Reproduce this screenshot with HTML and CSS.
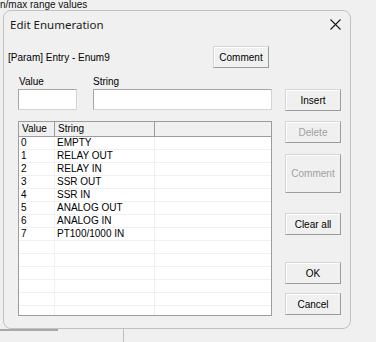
FILE: index.html
```html
<!DOCTYPE html>
<html>
  <head>
    <meta charset="utf-8" />
    <meta name="viewport" content="width=device-width, initial-scale=1.0" />
    <link rel="stylesheet" href="styles.css">
  </head>

  <body>
    <div class="caption">n/max range values</div>
    <div class="dialog">
      <div class="titlebar">
        <span class="title">Edit Enumeration</span>
        <svg class="close" width="11" height="11" viewBox="0 0 11 11">
          <path d="M0.5 0.5 L10.5 10.5 M10.5 0.5 L0.5 10.5" stroke="#1a1a1a" stroke-width="1.1" fill="none" />
        </svg>
      </div>
      <div class="headRow">
        <span>[Param] Entry - Enum9</span>
        <button class="btn btnTop">Comment</button>
      </div>
      <div class="main">
        <div class="labels">
          <span class="lblValue">Value</span>
          <span>String</span>
        </div>
        <div></div>
        <div class="inputs">
          <input class="field fieldValue" type="text" />
          <input class="field fieldString" type="text" />
        </div>
        <button class="btn">Insert</button>
        <div class="list">
          <div class="listHead">
            <span>Value</span><span>String</span><span></span>
          </div>
          <div class="listRow"><span>0</span><span>EMPTY</span><span></span></div>
          <div class="listRow"><span>1</span><span>RELAY OUT</span><span></span></div>
          <div class="listRow"><span>2</span><span>RELAY IN</span><span></span></div>
          <div class="listRow"><span>3</span><span>SSR OUT</span><span></span></div>
          <div class="listRow"><span>4</span><span>SSR IN</span><span></span></div>
          <div class="listRow"><span>5</span><span>ANALOG OUT</span><span></span></div>
          <div class="listRow"><span>6</span><span>ANALOG IN</span><span></span></div>
          <div class="listRow"><span>7</span><span>PT100/1000 IN</span><span></span></div>
          <div class="listRow"><span></span><span></span><span></span></div>
          <div class="listRow"><span></span><span></span><span></span></div>
          <div class="listRow"><span></span><span></span><span></span></div>
          <div class="listRow"><span></span><span></span><span></span></div>
          <div class="listRow"><span></span><span></span><span></span></div>
          <div class="listRow"><span></span><span></span><span></span></div>
        </div>
        <div class="side">
          <button class="btn" disabled>Delete</button>
          <button class="btn btnTall" disabled>Comment</button>
          <button class="btn btnClear">Clear all</button>
          <button class="btn btnOk">OK</button>
          <button class="btn btnCancel">Cancel</button>
        </div>
      </div>
    </div>
    <div class="under">
      <div class="underBar"></div>
      <div class="underLine"></div>
    </div>
  </body>
</html>
```

FILE: styles.css
```css
html {
  font-family: "Liberation Sans", Arial, sans-serif;
}

body {
  margin: 0;
  width: 376px;
  height: 342px;
  overflow: hidden;
  background-color: #f0f0f0;
  font-size: 10px;
  color: #000;
}

.caption {
  height: 10px;
  line-height: 10px;
  font-size: 10px;
  color: #111;
  white-space: nowrap;
}

.dialog {
  margin-left: 3px;
  width: 348px;
  height: 319px;
  box-sizing: border-box;
  border: 1px solid #c2c2c2;
  border-radius: 8px;
  background-color: #f0f0f0;
}

.titlebar {
  height: 26px;
  display: flex;
  align-items: center;
  justify-content: space-between;
  padding: 0 9px 0 6px;
}

.title {
  font-family: "Noto Sans", sans-serif;
  font-size: 11.5px;
  color: #1a1a1a;
}

.close {
  display: block;
}

.headRow {
  height: 22px;
  margin-top: 9px;
  padding: 0 81px 0 4px;
  display: flex;
  align-items: center;
  justify-content: space-between;
}

.btn {
  font: inherit;
  font-size: 10px;
  color: #000;
  background-color: #f0f0f0;
  border: 1px solid;
  border-color: #d6d6d6 #9c9c9c #9c9c9c #d6d6d6;
  box-shadow: inset 1px 1px #fff;
  padding: 0;
  height: 22px;
  width: 56px;
  box-sizing: border-box;
}

.btn:disabled {
  color: #a0a0a0;
}

.main {
  margin-top: 5px;
  padding-left: 14px;
  display: grid;
  grid-template-columns: 254px 56px;
  grid-template-rows: 16px 22px auto;
  column-gap: 13px;
}

.labels {
  display: flex;
  align-items: center;
}

.lblValue {
  width: 74px;
  padding-left: 1px;
}

.inputs {
  display: flex;
  gap: 16px;
}

.field {
  all: unset;
  height: 21px;
  box-sizing: border-box;
  background-color: #fff;
  border: 1px solid;
  border-color: #a6a6a6 #d4d4d4 #d4d4d4 #a6a6a6;
}

.fieldValue {
  width: 59px;
}

.fieldString {
  width: 179px;
}

.list {
  margin-top: 10px;
  height: 195px;
  box-sizing: border-box;
  border: 1px solid #9c9c9c;
  background-color: #fff;
  overflow: hidden;
}

.listHead,
.listRow {
  display: grid;
  grid-template-columns: 36px 100px 1fr;
}

.listHead {
  height: 15px;
  box-sizing: border-box;
  background-color: #f0f0f0;
  border-bottom: 1px solid #9c9c9c;
  line-height: 14px;
}

.listHead span {
  padding-left: 3px;
  border-right: 1px solid #9c9c9c;
}

.listHead span:last-child {
  border-right: 0;
}

.listRow {
  height: 13px;
  box-sizing: border-box;
  border-bottom: 1px solid #f0f0f0;
  line-height: 12px;
}

.listRow span {
  padding-left: 2px;
  border-right: 1px solid #f0f0f0;
  white-space: nowrap;
}

.listRow span:last-child {
  border-right: 0;
}

.side {
  margin-top: 10px;
  display: flex;
  flex-direction: column;
}

.btnTall {
  margin-top: 11px;
  height: 39px;
}

.btnClear {
  margin-top: 20px;
}

.btnOk {
  margin-top: 27px;
}

.btnCancel {
  margin-top: 9px;
}

.under {
  display: flex;
  height: 13px;
}

.underBar {
  width: 58px;
  height: 2px;
  background-color: #a8a8a8;
}

.underLine {
  margin-left: 65px;
  width: 1px;
  background-color: #c0c0c0;
}
```
